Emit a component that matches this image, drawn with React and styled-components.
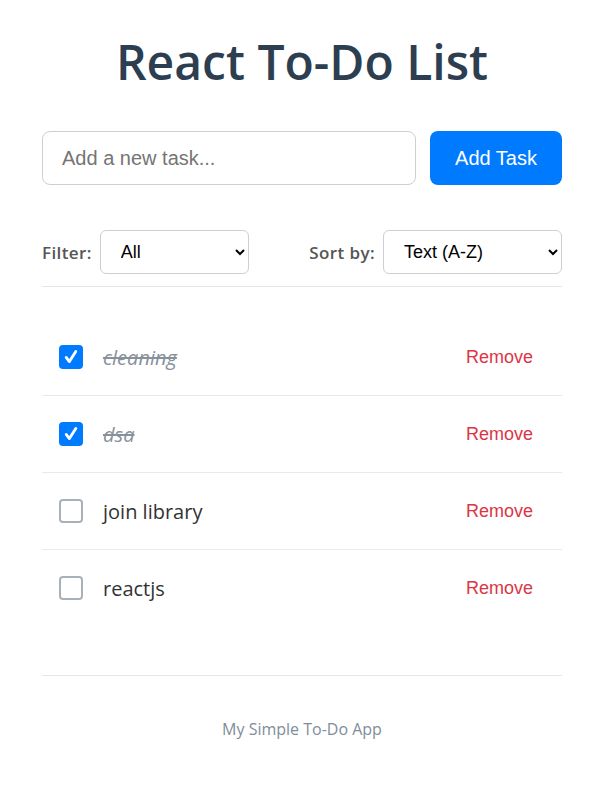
import React, { useState } from 'react'
import styled, { createGlobalStyle } from 'styled-components'

const GlobalStyle = createGlobalStyle`
  body {
    margin: 0;
    background: #fff;
    font-family: "Open Sans", "Noto Sans", sans-serif;
  }
`;

const Container = styled.div`
  width: 520px;
  margin: 0 0 0 calc(50% - 261px);
  padding-top: 25px;
`;

const Title = styled.h1`
  margin: 0 0 32px;
  text-align: center;
  font-size: 48px;
  font-weight: 600;
  color: #2c3e50;
  line-height: 74px;
`;

const Form = styled.form`
  display: flex;
  gap: 14px;
  margin-bottom: 45px;
`;

const TaskInput = styled.input`
  flex: 1;
  height: 54px;
  box-sizing: border-box;
  padding: 0 19px;
  border: 1px solid #ccd0d5;
  border-radius: 8px;
  font-family: "Liberation Sans", Arial, sans-serif;
  font-size: 20px;
  color: #333;
  outline: none;
  &::placeholder { color: #757575; }
`;

const AddButton = styled.button`
  width: 132px;
  height: 54px;
  border: none;
  border-radius: 8px;
  background: #007bff;
  color: #fff;
  font-family: "Liberation Sans", Arial, sans-serif;
  font-size: 20px;
  cursor: pointer;
`;

const Controls = styled.div`
  display: flex;
  justify-content: space-between;
  align-items: center;
  padding-bottom: 12px;
  border-bottom: 1px solid #e6e6e6;
  margin-bottom: 32px;
`;

const Group = styled.label`
  display: flex;
  align-items: center;
  gap: 8px;
  font-size: 17px;
  font-weight: 600;
  letter-spacing: 0.4px;
  color: #555;
`;

const Select = styled.select`
  width: ${({ $w }) => $w}px;
  height: 44px;
  padding: 0 14px 0 16px;
  border: 1px solid #ccd0d5;
  border-radius: 6px;
  background: #fff;
  font-family: "Liberation Sans", Arial, sans-serif;
  font-size: 18px;
  letter-spacing: 0;
  color: #000;
`;

const List = styled.ul`
  list-style: none;
  margin: 0;
  padding: 0;
`;

const Item = styled.li`
  display: flex;
  align-items: center;
  height: 76px;
  padding: 0 29px 0 17px;
  border-bottom: 1px solid #e9e9e9;
  &:last-child { border-bottom: none; }
`;

const Check = styled.span`
  width: 24px;
  height: 24px;
  box-sizing: border-box;
  border-radius: 4px;
  display: flex;
  align-items: center;
  justify-content: center;
  flex-shrink: 0;
  cursor: pointer;
  background: ${({ $on }) => ($on ? '#007bff' : '#fff')};
  border: ${({ $on }) => ($on ? 'none' : '2px solid #a9b0b7')};
`;

const TaskText = styled.span`
  flex: 1;
  margin-left: 20px;
  font-size: 20px;
  color: ${({ $done }) => ($done ? '#87919b' : '#333')};
  font-style: ${({ $done }) => ($done ? 'italic' : 'normal')};
  text-decoration: ${({ $done }) => ($done ? 'line-through' : 'none')};
`;

const RemoveButton = styled.button`
  border: none;
  background: none;
  padding: 0;
  color: #dc3545;
  font-family: "Liberation Sans", Arial, sans-serif;
  font-size: 18px;
  cursor: pointer;
`;

const Footer = styled.footer`
  margin-top: 49px;
  border-top: 1px solid #e6e6e6;
  padding-top: 42px;
  text-align: center;
  font-size: 16px;
  color: #808d9a;
`;

const initial = [
  { id: 1, text: 'cleaning', done: true },
  { id: 2, text: 'dsa', done: true },
  { id: 3, text: 'join library', done: false },
  { id: 4, text: 'reactjs', done: false },
];

const App = () => {
  const [todos, setTodos] = useState(initial);

  const toggle = id =>
    setTodos(todos.map(t => (t.id === id ? { ...t, done: !t.done } : t)));

  return (
    <Container>
      <GlobalStyle />
      <Title>React To-Do List</Title>
      <Form onSubmit={e => e.preventDefault()}>
        <TaskInput placeholder="Add a new task..." />
        <AddButton type="submit">Add Task</AddButton>
      </Form>
      <Controls>
        <Group>
          Filter:
          <Select $w={149} defaultValue="all">
            <option value="all">All</option>
            <option value="active">Active</option>
            <option value="completed">Completed</option>
          </Select>
        </Group>
        <Group>
          Sort by:
          <Select $w={179} defaultValue="text">
            <option value="text">Text (A-Z)</option>
            <option value="date">Date Added</option>
          </Select>
        </Group>
      </Controls>
      <List>
        {todos.map(t => (
          <Item key={t.id}>
            <Check $on={t.done} onClick={() => toggle(t.id)}>
              {t.done && (
                <svg width="24" height="24" viewBox="0 0 24 24">
                  <path d="M7.2 12.4 L10.4 16.6 L16.8 6.4" fill="none" stroke="#fff" strokeWidth="2.8" strokeLinecap="round" strokeLinejoin="round" />
                </svg>
              )}
            </Check>
            <TaskText $done={t.done}>{t.text}</TaskText>
            <RemoveButton onClick={() => setTodos(todos.filter(x => x.id !== t.id))}>Remove</RemoveButton>
          </Item>
        ))}
      </List>
      <Footer>My Simple To-Do App</Footer>
    </Container>
  )
}

export default App;
